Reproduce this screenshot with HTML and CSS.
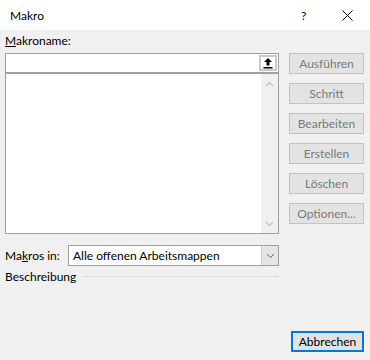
FILE: index.html
```html
<!DOCTYPE html>
<html lang="de">

<head>
    <meta charset="UTF-8">
    <title>Makro</title>
    <link rel="stylesheet" href="styles.css">
</head>

<body>
    <div class="titlebar">
        <span class="titlebar__title">Makro</span>
        <span class="titlebar__help">?</span>
        <span class="titlebar__close">
            <svg width="11" height="11" viewBox="0 0 11 11">
                <path d="M0.5 0.5 L10.5 10.5 M10.5 0.5 L0.5 10.5" stroke="#000" stroke-width="1" fill="none"/>
            </svg>
        </span>
    </div>

    <div class="main">
        <div class="left">
            <div class="label"><u>M</u>akroname:</div>
            <div class="namebox">
                <div class="namebox__field"></div>
                <div class="namebox__btn">
                    <svg width="12" height="12" viewBox="0 0 12 12">
                        <path d="M6 1 L10 5 L7.5 5 L7.5 8.5 L4.5 8.5 L4.5 5 L2 5 Z" fill="#000"/>
                        <rect x="1.5" y="10" width="9" height="1.5" fill="#000"/>
                    </svg>
                </div>
            </div>
            <div class="macrolist">
                <div class="macrolist__items"></div>
                <div class="macrolist__scroll">
                    <svg width="9" height="6" viewBox="0 0 9 6">
                        <path d="M1 5 L4.5 1.5 L8 5" stroke="#c2c2c2" stroke-width="1.3" fill="none"/>
                    </svg>
                    <svg width="9" height="6" viewBox="0 0 9 6">
                        <path d="M1 1 L4.5 4.5 L8 1" stroke="#c2c2c2" stroke-width="1.3" fill="none"/>
                    </svg>
                </div>
            </div>
            <div class="macrosin">
                <span class="macrosin__label">Ma<u>k</u>ros in:</span>
                <div class="combo">
                    <span class="combo__text">Alle offenen Arbeitsmappen</span>
                    <span class="combo__arrow">
                        <svg width="9" height="6" viewBox="0 0 9 6">
                            <path d="M1 1 L4.5 4.5 L8 1" stroke="#606060" stroke-width="1" fill="none"/>
                        </svg>
                    </span>
                </div>
            </div>
            <div class="desc">
                <span>Beschreibung</span>
                <span class="desc__line"></span>
            </div>
        </div>

        <div class="buttons">
            <button class="btn" disabled>Ausführen</button>
            <button class="btn" disabled>Schritt</button>
            <button class="btn" disabled>Bearbeiten</button>
            <button class="btn" disabled>Erstellen</button>
            <button class="btn" disabled>Löschen</button>
            <button class="btn" disabled>Optionen...</button>
        </div>
    </div>

    <div class="footer">
        <button class="btn btn--default">Abbrechen</button>
    </div>
</body>

</html>
```

FILE: styles.css
```css
body {
    margin: 0;
    background-color: #f0f0f0;
    font-family: Lato, "Noto Sans", Arial, sans-serif;
    font-size: 12px;
    color: #000;
    width: 370px;
    height: 360px;
    overflow: hidden;
}

.titlebar {
    height: 30px;
    background-color: #fff;
    display: flex;
    align-items: center;
}

.titlebar__title {
    padding-left: 10px;
    flex-grow: 1;
}

.titlebar__help {
    width: 10px;
    margin-right: 31px;
}

.titlebar__close {
    display: flex;
    margin-right: 17px;
}

.main {
    display: flex;
    padding-left: 5px;
    gap: 10px;
}

.left {
    width: 274px;
}

.label {
    height: 23px;
    line-height: 16px;
    padding-top: 3px;
    box-sizing: border-box;
}

.label u,
.macrosin__label u {
    text-underline-offset: 1px;
}

.namebox {
    display: flex;
    height: 18px;
    border: 1px solid #a0a0a0;
    border-bottom: none;
    background-color: #fff;
}

.namebox__field {
    flex-grow: 1;
}

.namebox__btn {
    width: 12px;
    height: 12px;
    margin: 1px 1px 0 0;
    border: 2px solid #c9c9c9;
    background-color: #fff;
    display: flex;
    align-items: center;
    justify-content: center;
    padding: 0 1px;
}

.macrolist {
    display: flex;
    height: 159px;
    border: 1px solid #a0a0a0;
    border-top: 2px solid #a0a0a0;
    background-color: #fff;
}

.macrolist__items {
    flex-grow: 1;
}

.macrolist__scroll {
    width: 17px;
    background-color: #f0f0f0;
    display: flex;
    flex-direction: column;
    justify-content: space-between;
    align-items: center;
    padding: 7px 0 6px;
}

.macrosin {
    display: flex;
    align-items: center;
    margin-top: 11px;
    height: 21px;
}

.macrosin__label {
    width: 63px;
}

.combo {
    flex-grow: 1;
    display: flex;
    height: 19px;
    border: 1px solid #a0a0a0;
    background-color: #fff;
}

.combo__text {
    flex-grow: 1;
    padding-left: 4px;
    line-height: 19px;
}

.combo__arrow {
    width: 16px;
    background-color: #e5e5e5;
    border-left: 1px solid #cfcfcf;
    display: flex;
    align-items: center;
    justify-content: center;
}

.desc {
    display: flex;
    align-items: center;
    height: 20px;
}

.desc__line {
    flex-grow: 1;
    height: 1px;
    margin-left: 6px;
    background-color: #dcdcdc;
}

.buttons {
    display: flex;
    flex-direction: column;
    gap: 9px;
    padding-top: 23px;
}

.btn {
    width: 75px;
    height: 21px;
    padding: 0;
    font-family: Lato, "Noto Sans", Arial, sans-serif;
    font-size: 12px;
    background-color: #e1e1e1;
    border: 1px solid #adadad;
    color: #000;
}

.btn:disabled {
    background-color: #e3e3e3;
    border-color: #c2c2c2;
    color: #7a7a7a;
}

.footer {
    display: flex;
    justify-content: flex-end;
    padding-right: 6px;
    margin-top: 45px;
}

.btn--default {
    width: 73px;
    border: 2px solid #0078d7;
}
```
